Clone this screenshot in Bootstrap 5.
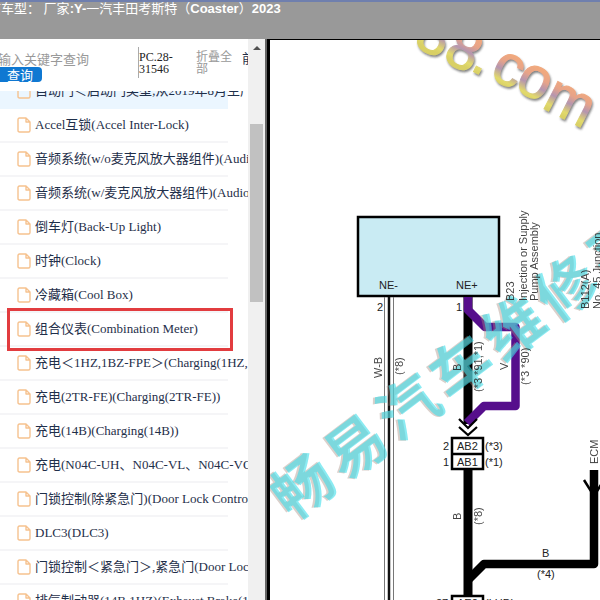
<!DOCTYPE html>
<html lang="zh-CN">
<head>
<meta charset="utf-8">
<meta name="viewport" content="width=device-width, initial-scale=1">
<title>Coaster 2023</title>
<link href="https://cdn.jsdelivr.net/npm/bootstrap@5.3.0/dist/css/bootstrap.min.css" rel="stylesheet">
<style>
body{font-family:"Liberation Serif","Noto Sans CJK SC",serif;font-size:13px;line-height:16px;color:#1f2f4a}
.topbar{height:39px;background:#999;border-top:2px solid #6f7fae;font-family:"Liberation Sans","Noto Sans CJK SC",sans-serif;line-height:14px}
.topbar span{margin-left:-25px}
.side{width:248px}
.tools{height:52px}
.search{width:138px;margin-left:-2px}
.search input{width:100px;height:16px;font-family:"Noto Sans CJK SC",sans-serif;font-size:13px;line-height:16px;outline:0}
.search input::placeholder{color:#999;opacity:1}
.search button{width:44px;height:15px;background:#0f78d2;font-family:"Noto Sans CJK SC",sans-serif;font-size:13px;line-height:14px;border-radius:0 4px 4px 0;padding-left:9px}
.code{width:50px;height:31px;border-left:1px solid #aaa;font-size:12px;line-height:12px;color:#222;margin-left:2px}
.fold{width:38px;font-size:12px;line-height:12px;color:#999}
.tree{margin-top:-16px}
.tree li{height:34px;width:228px;border-bottom:2px solid #f5f5f7}
.tree li.on{background:#ebf6ff;border-color:#ebf6ff}
.tree a{color:#1f2f4a;padding-left:17px;gap:4px}
.tree svg{width:14px;height:16px;flex:none;fill:none;stroke:#f6c28f;stroke-width:1.4;stroke-linejoin:round}
.ring{position:absolute;left:7px;top:-5px;right:-5px;bottom:-6px;border:3px solid #e23c3f;pointer-events:none}
.track{width:17px;background:#f0f0f0}
.thumb{width:13px;height:178px;background:#c1c1c1;margin-top:74px}
.arrow{border:4px solid transparent;border-top:0;border-bottom:4px solid #505050;margin-top:7px}
.pane{border-left:3px solid #000;border-top:1px solid #000;min-width:0}
.edge{width:2px;background:#666}
.diagram text{font-family:"Liberation Sans",sans-serif;font-size:11px;fill:#222}
.diagram .wm{font-family:"Noto Sans CJK SC",sans-serif;font-weight:700;font-size:60px}
.diagram .site{font-size:58px;font-weight:400;fill:url(#rainbow);stroke:url(#rainbow);stroke-width:1}
</style>
<script src="https://cdn.jsdelivr.net/npm/bootstrap@5.3.0/dist/js/bootstrap.bundle.min.js"></script>
</head>
<body class="vh-100 d-flex flex-column overflow-hidden bg-white">
<svg width="0" height="0" class="position-absolute"><symbol id="doc" viewBox="0 0 14 16"><path d="M2.5 1H9l4 4v8.500q0 1.500-1.500 1.500h-9Q1 15 1 13.500v-11Q1 1 2.500 1zM9 1v4h4"/></symbol></svg>
<header class="topbar flex-shrink-0 overflow-hidden text-white text-nowrap"><span>当前车型： 厂家<b>:Y-</b>一汽丰田考斯特（<b>Coaster</b>）<b>2023</b></span></header>
<main class="d-flex flex-grow-1 overflow-hidden">
<aside class="side flex-shrink-0 d-flex flex-column overflow-hidden">
<div class="tools flex-shrink-0 d-flex text-nowrap bg-white position-relative z-1 overflow-hidden">
<form class="search flex-shrink-0 d-flex flex-column align-items-start pt-2" onsubmit="return false"><input type="text" class="border-0 p-0 mt-1 bg-transparent" aria-label="输入关键字查询" placeholder="输入关键字查询"><button class="border-0 text-white py-0 pe-0 text-start" type="submit">查询</button></form>
<div class="code flex-shrink-0 mt-2 pt-1">PC.28-<br>31546</div>
<div class="fold flex-shrink-0 ms-2 mt-2 pt-1">折叠全<br>部</div>
<div class="ms-2 mt-2 pt-1">前</div>
</div>
<ul class="tree list-unstyled mb-0 text-nowrap">
<li class="on"><a href="#" class="h-100 d-flex align-items-center text-decoration-none"><svg><use href="#doc"/></svg>自动门＜启动门类型;从2019年8月生产</a></li>
<li><a href="#" class="h-100 d-flex align-items-center text-decoration-none"><svg><use href="#doc"/></svg>Accel互锁(Accel Inter-Lock)</a></li>
<li><a href="#" class="h-100 d-flex align-items-center text-decoration-none"><svg><use href="#doc"/></svg>音频系统(w/o麦克风放大器组件)(Audio</a></li>
<li><a href="#" class="h-100 d-flex align-items-center text-decoration-none"><svg><use href="#doc"/></svg>音频系统(w/麦克风放大器组件)(Audio</a></li>
<li><a href="#" class="h-100 d-flex align-items-center text-decoration-none"><svg><use href="#doc"/></svg>倒车灯(Back-Up Light)</a></li>
<li><a href="#" class="h-100 d-flex align-items-center text-decoration-none"><svg><use href="#doc"/></svg>时钟(Clock)</a></li>
<li><a href="#" class="h-100 d-flex align-items-center text-decoration-none"><svg><use href="#doc"/></svg>冷藏箱(Cool Box)</a></li>
<li class="position-relative"><a href="#" class="h-100 d-flex align-items-center text-decoration-none"><svg><use href="#doc"/></svg>组合仪表(Combination Meter)</a><span class="ring"></span></li>
<li><a href="#" class="h-100 d-flex align-items-center text-decoration-none"><svg><use href="#doc"/></svg>充电＜1HZ,1BZ-FPE＞(Charging(1HZ,</a></li>
<li><a href="#" class="h-100 d-flex align-items-center text-decoration-none"><svg><use href="#doc"/></svg>充电(2TR-FE)(Charging(2TR-FE))</a></li>
<li><a href="#" class="h-100 d-flex align-items-center text-decoration-none"><svg><use href="#doc"/></svg>充电(14B)(Charging(14B))</a></li>
<li><a href="#" class="h-100 d-flex align-items-center text-decoration-none"><svg><use href="#doc"/></svg>充电(N04C-UH、N04C-VL、N04C-VQ</a></li>
<li><a href="#" class="h-100 d-flex align-items-center text-decoration-none"><svg><use href="#doc"/></svg>门锁控制(除紧急门)(Door Lock Control</a></li>
<li><a href="#" class="h-100 d-flex align-items-center text-decoration-none"><svg><use href="#doc"/></svg>DLC3(DLC3)</a></li>
<li><a href="#" class="h-100 d-flex align-items-center text-decoration-none"><svg><use href="#doc"/></svg>门锁控制＜紧急门＞,紧急门(Door Lock</a></li>
<li><a href="#" class="h-100 d-flex align-items-center text-decoration-none"><svg><use href="#doc"/></svg>排气制动器(14B,1HZ)(Exhaust Brake(1</a></li>
</ul>
</aside>
<div class="track flex-shrink-0 d-flex flex-column align-items-center"><div class="arrow"></div><div class="thumb flex-shrink-0"></div></div>
<div class="edge flex-shrink-0"></div>
<section class="pane flex-grow-1 overflow-hidden">
<svg class="diagram d-block w-100 h-100" viewBox="270 40 330 560" preserveAspectRatio="xMinYMin slice" role="img" aria-label="Wiring diagram">
<defs>
<linearGradient id="rainbow" gradientUnits="userSpaceOnUse" x1="0" y1="-32" x2="0" y2="4"><stop offset="0.1" stop-color="#f0a070"/><stop offset=".35" stop-color="#e59a7c"/><stop offset=".58" stop-color="#ad8aa8"/><stop offset=".85" stop-color="#dfd65c"/><stop offset="1" stop-color="#d5cb55"/></linearGradient>
<filter id="soft" x="-10%" y="-30%" width="120%" height="160%"><feDropShadow dx="1" dy="2" stdDeviation="1.200" flood-color="#555" flood-opacity=".8"/></filter>
</defs>
<g filter="url(#soft)" opacity=".9"><g transform="translate(418 39) rotate(27)"><text class="site" x="-3 30 59 80 107 140" y="8 8 4 2 1 5">88.com</text></g></g>
<rect x="358" y="217" width="141" height="79" fill="#c9ebf3" stroke="#000" stroke-width="2.500"/>
<g fill="none">
<path d="M389 297V600" stroke="#111" stroke-width="2.500"/>
<path d="M384.500 297V600M393.500 297V600" stroke="#777" stroke-width="1"/>
<path d="M468 297V424M468 470V596" stroke="#000" stroke-width="9"/>
<path d="M468 297V310L485 327H515.500V406H484L467 423" stroke="#560f8c" stroke-width="8.500" stroke-linejoin="round"/>
<path d="M459 419L468 428L477 419M459 427L468 435L477 427" stroke="#000" stroke-width="2.200"/>
<path d="M468 580L484 564H594V470" stroke="#000" stroke-width="8.500" stroke-linejoin="round"/>
<path d="M584 480L594 496L604 480" stroke="#000" stroke-width="2.500"/>
<path d="M452 438H483V469H452ZM452 454H483M452 610V596H483V610" stroke="#000" stroke-width="2.500"/>
</g>
<g transform="translate(298 518) rotate(-37)"><text class="wm" x="-9 57 123 189 255 321 387" y="-1" style="fill:#a58b80" opacity=".4">畅易汽车维修平</text><text class="wm" x="-7 59 125 191 257 323 389" y="0" style="fill:#3fdeea" opacity=".6">畅易汽车维修平</text></g>
<text x="379" y="289">NE-</text><text x="456" y="289">NE+</text>
<text x="377" y="311">2</text><text x="456" y="311">1</text>
<text x="457" y="450">AB2</text><text x="457" y="466">AB1</text>
<text x="443" y="450">2</text><text x="443" y="466">1</text>
<text x="485" y="450">(*3)</text><text x="485" y="466">(*1)</text>
<text x="542" y="557">B</text><text x="537" y="578">(*4)</text>
<text x="436" y="607">27</text><text x="457" y="607">AE2</text><text x="485" y="607">(LHD)</text>
<g opacity=".85">
<text transform="translate(382 378) rotate(-90)">W-B</text>
<text transform="translate(403 375) rotate(-90)">(*8)</text>
<text transform="translate(461 371) rotate(-90)">B</text>
<text transform="translate(482 392) rotate(-90)">(*3 *91,*1)</text>
<text transform="translate(508 370) rotate(-90)">V</text>
<text transform="translate(529 385) rotate(-90)">(*3 *90)</text>
<text transform="translate(461 520) rotate(-90)">B</text>
<text transform="translate(482 525) rotate(-90)">(*8)</text>
<text transform="translate(598 464) rotate(-90)">ECM</text>
<text transform="translate(514 301) rotate(-90)">B23</text>
<text transform="translate(527 301) rotate(-90)">Injection or Supply</text>
<text transform="translate(538 301) rotate(-90)">Pump Assembly</text>
<text transform="translate(589 309) rotate(-90)">B112(A)</text>
<text transform="translate(601 309) rotate(-90)">No. 45 Junction</text>
</g>
</svg>
</section>
</main>
</body>
</html>
